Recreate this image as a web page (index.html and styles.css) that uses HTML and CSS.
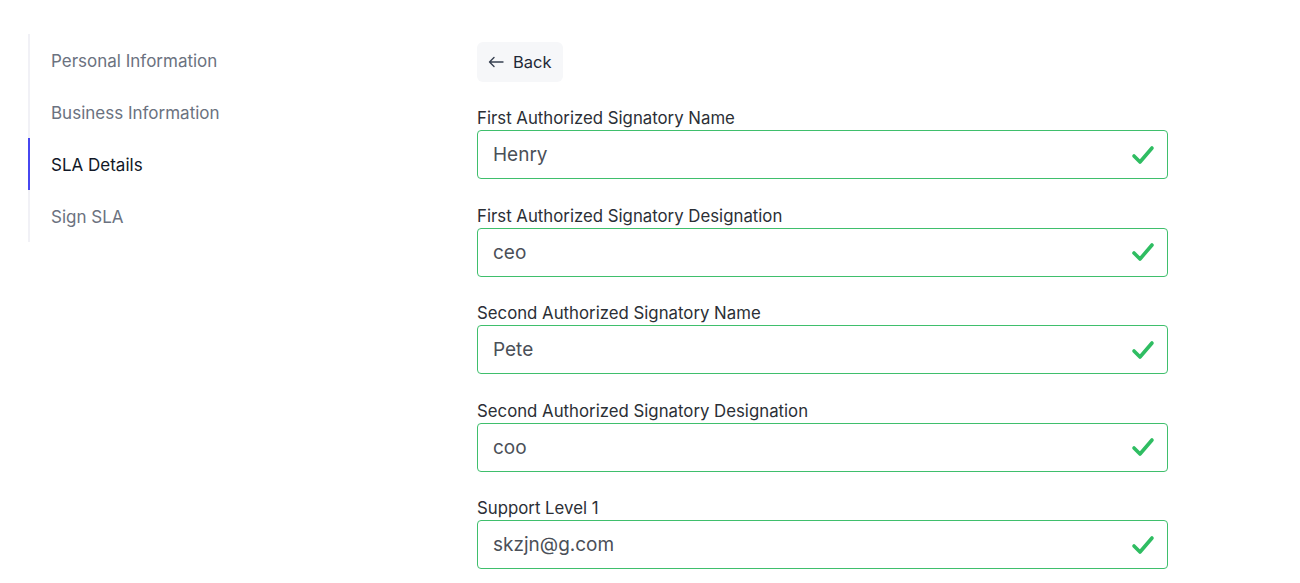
FILE: index.html
```html
<!DOCTYPE html>
<html lang="en">
<head>
<meta charset="utf-8">
<title>SLA Details</title>
<link rel="stylesheet" href="styles.css">
</head>
<body>
<div class="page">
  <nav class="steps">
    <div class="step">Personal Information</div>
    <div class="step">Business Information</div>
    <div class="step active">SLA Details</div>
    <div class="step">Sign SLA</div>
  </nav>
  <main class="form">
    <button class="back" type="button">
      <svg width="16" height="12" viewBox="0 0 16 12" fill="none" stroke="#374151" stroke-width="1.4" stroke-linecap="round" stroke-linejoin="round"><path d="M15 6H1.5M6 1.5L1.5 6 6 10.5"/></svg>
      <span>Back</span>
    </button>
    <div class="field">
      <label>First Authorized Signatory Name</label>
      <div class="input"><span>Henry</span><svg class="check" viewBox="0 0 24 20"><path d="M3 11l6 6L21 3"/></svg></div>
    </div>
    <div class="field">
      <label>First Authorized Signatory Designation</label>
      <div class="input"><span>ceo</span><svg class="check" viewBox="0 0 24 20"><path d="M3 11l6 6L21 3"/></svg></div>
    </div>
    <div class="field">
      <label>Second Authorized Signatory Name</label>
      <div class="input"><span>Pete</span><svg class="check" viewBox="0 0 24 20"><path d="M3 11l6 6L21 3"/></svg></div>
    </div>
    <div class="field">
      <label>Second Authorized Signatory Designation</label>
      <div class="input"><span>coo</span><svg class="check" viewBox="0 0 24 20"><path d="M3 11l6 6L21 3"/></svg></div>
    </div>
    <div class="field">
      <label>Support Level 1</label>
      <div class="input"><span>skzjn@g.com</span><svg class="check" viewBox="0 0 24 20"><path d="M3 11l6 6L21 3"/></svg></div>
    </div>
  </main>
</div>
</body>
</html>
```
FILE: styles.css
```css
* { box-sizing: border-box; }
html, body { margin: 0; padding: 0; background: #fff; }
body {
  font-family: Inter, "Noto Sans", "Liberation Sans", sans-serif;
  height: 583px;
  overflow: hidden;
}
.page {
  display: flex;
  align-items: flex-start;
  padding: 34px 0 0 28px;
}
.steps {
  width: 449px;
  flex: none;
  border-left: 2px solid #f1f1f6;
  display: flex;
  flex-direction: column;
}
.step {
  height: 52px;
  display: flex;
  align-items: center;
  padding: 2px 0 0 21px;
  font-size: 17px;
  color: #6b7280;
  margin-left: -2px;
  border-left: 2px solid transparent;
}
.step.active {
  color: #111827;
  border-left-color: #4747f0;
}
.form {
  width: 691px;
  padding-top: 8px;
  display: flex;
  flex-direction: column;
}
.back {
  align-self: flex-start;
  display: flex;
  align-items: center;
  gap: 9px;
  height: 40px;
  padding: 0 11px;
  border: none;
  border-radius: 6px;
  background: #f6f7f9;
  font-family: inherit;
  font-size: 16.5px;
  color: #1f2937;
  margin-bottom: 24px;
}
.field {
  display: flex;
  flex-direction: column;
  margin-bottom: 24.5px;
}
.field label {
  font-size: 16.8px;
  line-height: 24px;
  color: #2b2f36;
  margin-bottom: 0;
}
.input {
  height: 49px;
  border: 1px solid #3fbf6c;
  border-radius: 4px;
  display: flex;
  align-items: center;
  justify-content: space-between;
  padding: 0 12px 0 15px;
  font-size: 19px;
  color: #4b5058;
}
.check {
  width: 24px;
  height: 20px;
  fill: none;
  stroke: #2fbd62;
  stroke-width: 3.6;
  stroke-linecap: round;
  stroke-linejoin: round;
}
```
